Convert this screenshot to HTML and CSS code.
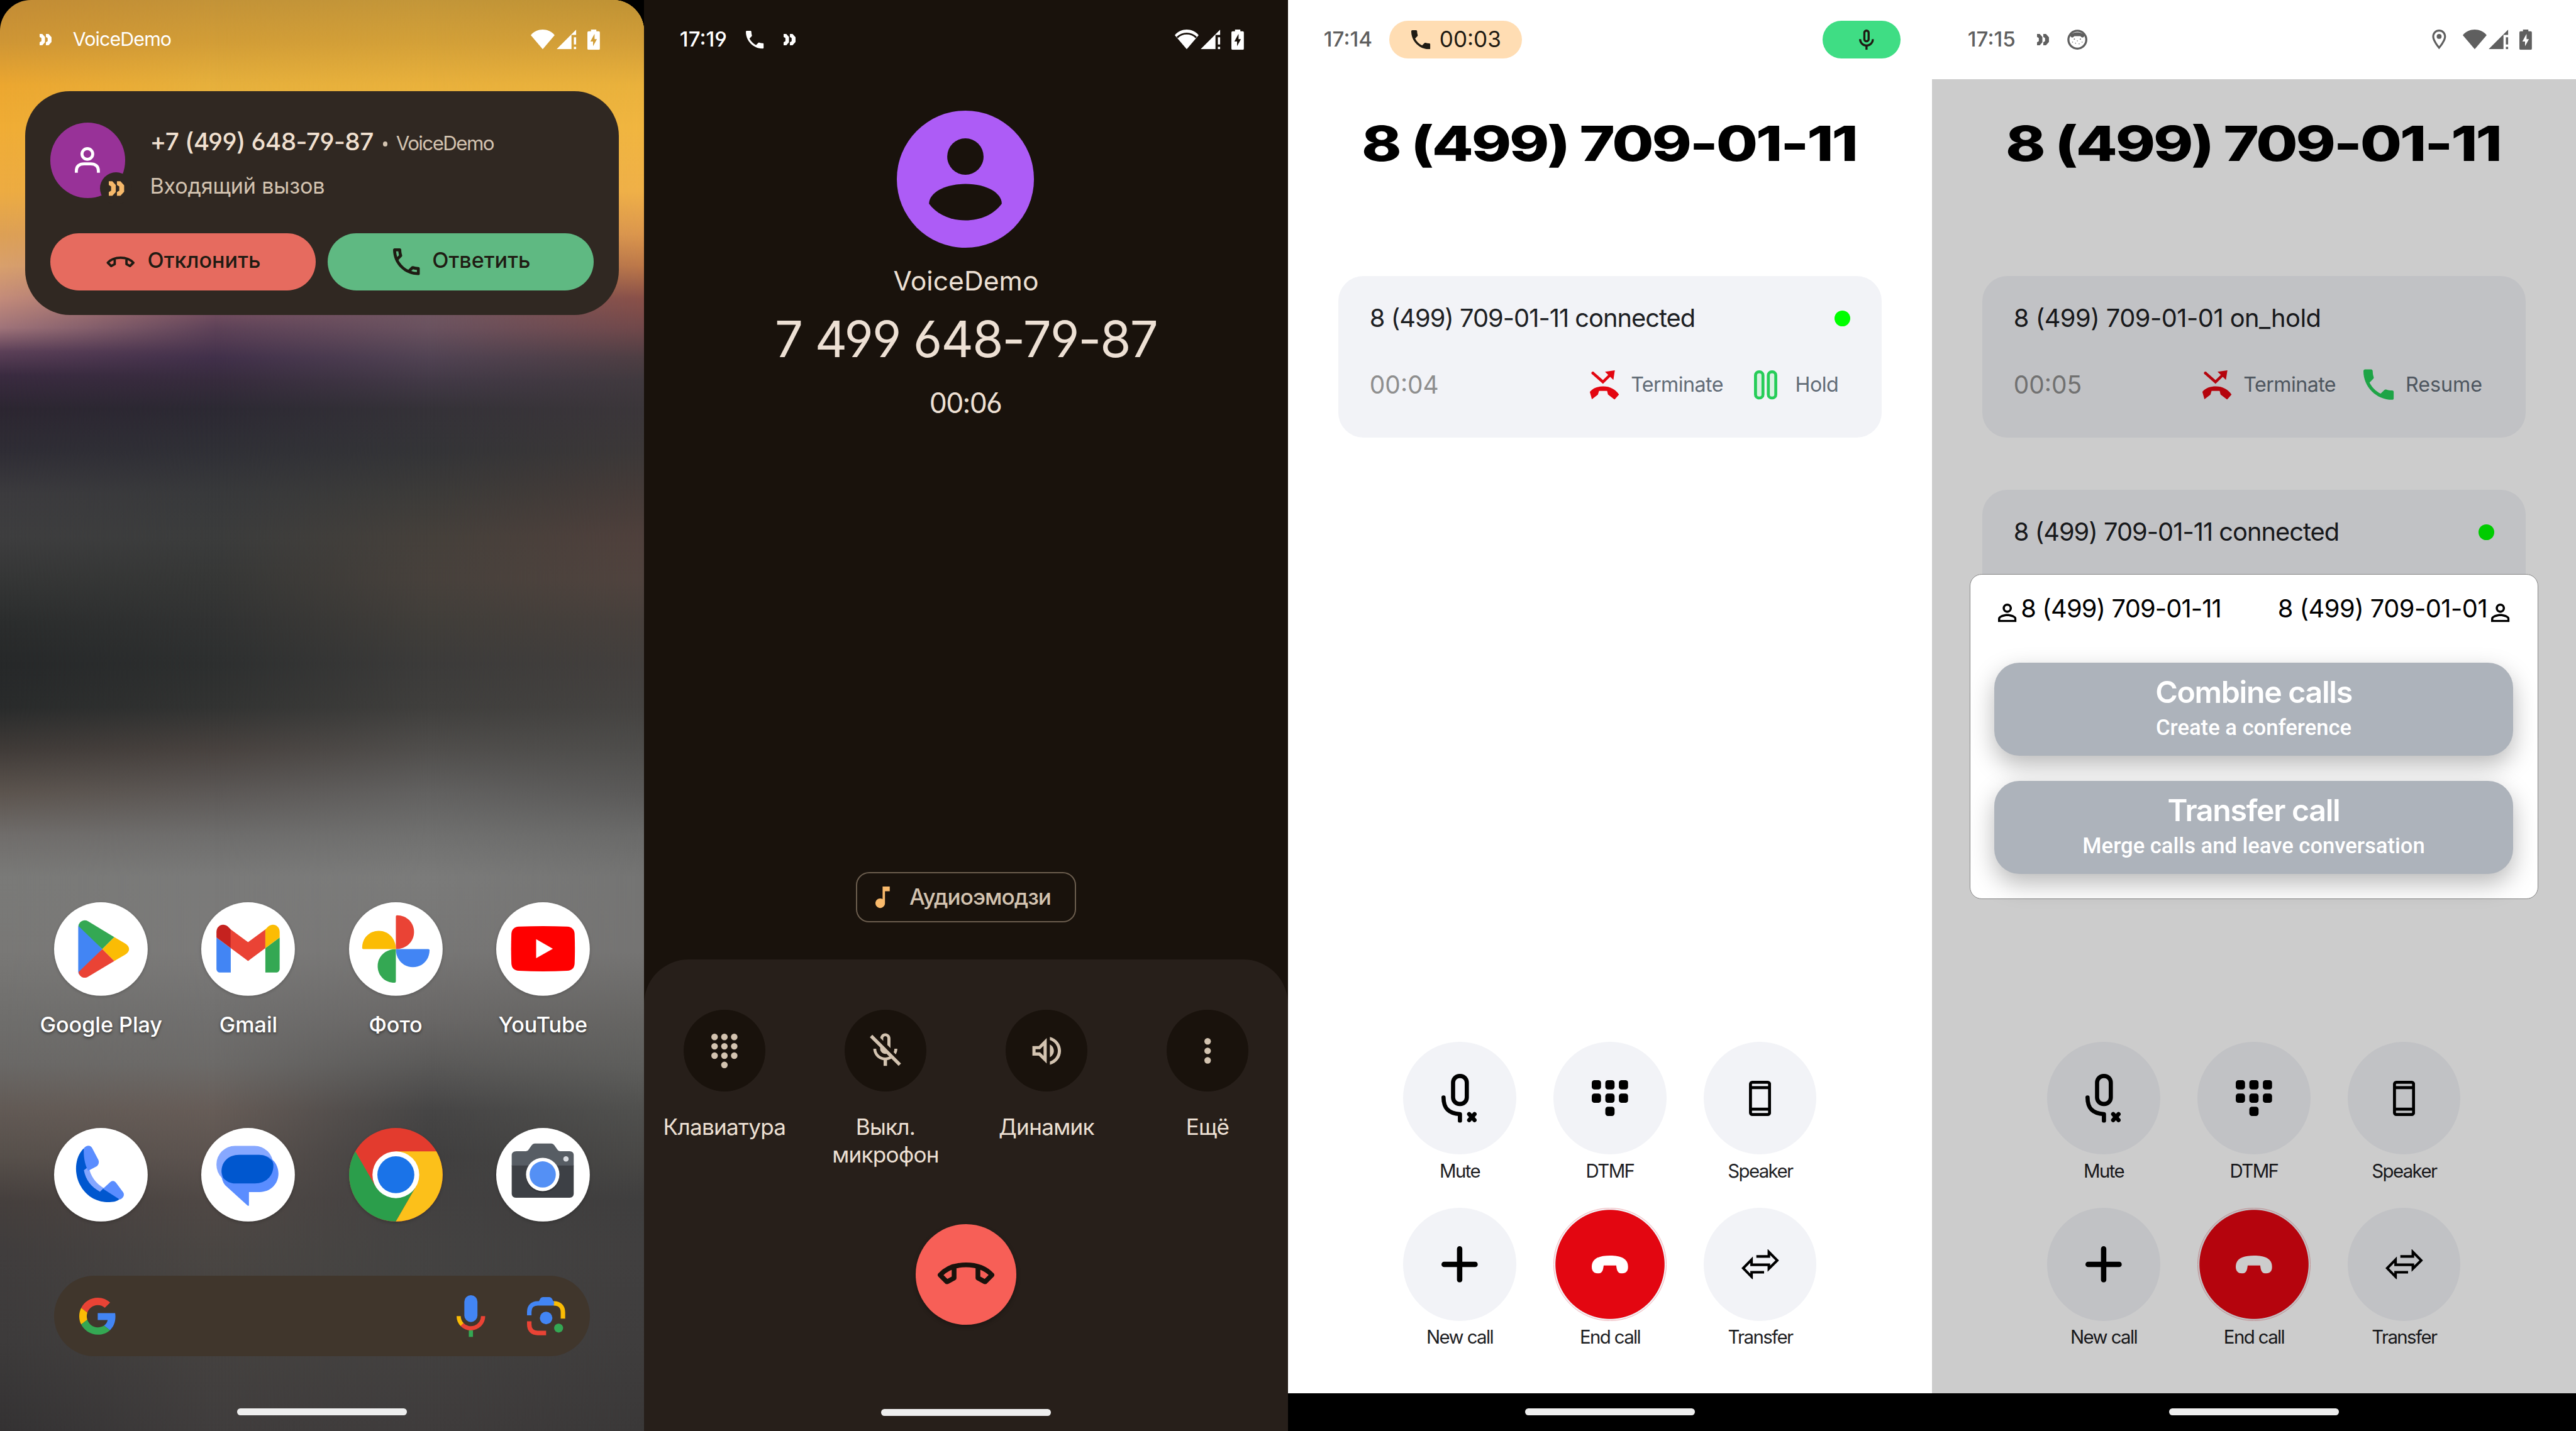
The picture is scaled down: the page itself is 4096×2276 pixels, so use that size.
FILE: index.html
```html
<!DOCTYPE html>
<html lang="ru">
<head>
<meta charset="utf-8">
<title>VoiceDemo</title>
<link rel="stylesheet" href="styles.css">
</head>
<body>
<svg class="sprite" aria-hidden="true">
  <symbol id="brand" viewBox="0 0 20 19"><path d="M0 0h4.500l4.500 5v9l-4.500 5H0v-5l3-1.800V6.800L0 5zM10.500 0h4.500l5 5.500v8L15 19h-4.500v-5l3-1.800V6.800L10.500 5z"/></symbol>
  <symbol id="wifi" viewBox="0 0 40 33"><path d="M20 33L0 9.500C10-3 30-3 40 9.500z"/></symbol>
  <symbol id="wifi-gap" viewBox="0 0 40 33"><path d="M20 33L0 9.500C10-3 30-3 40 9.500z"/><path class="cut" d="M4 13.500C13 4.500 27 4.500 36 13.500" fill="none" stroke-width="3"/></symbol>
  <symbol id="signal" viewBox="0 0 33 33"><path d="M0 33L33 0v9h-8v24zM29 13h4v12h-4zM29 29h4v4h-4z"/></symbol>
  <symbol id="battery" viewBox="0 0 21 34"><path fill-rule="evenodd" d="M6 0h9v3h4a2 2 0 0 1 2 2v27a2 2 0 0 1-2 2H2a2 2 0 0 1-2-2V5a2 2 0 0 1 2-2h4zM12 7L5 20h4.500v8L16 16h-4z"/></symbol>
  <symbol id="call" viewBox="3 3 18 18"><path d="M6.620 10.790c1.440 2.830 3.760 5.140 6.590 6.590l2.200-2.200c.27-.27.67-.36 1.020-.24 1.120.37 2.330.57 3.570.57.55 0 1 .45 1 1V20c0 .55-.45 1-1 1-9.390 0-17-7.610-17-17 0-.55.45-1 1-1h3.500c.55 0 1 .45 1 1 0 1.250.2 2.450.57 3.570.11.35.03.74-.25 1.020l-2.200 2.200z"/></symbol>
  <symbol id="call-outline" viewBox="3 3 18 18"><path d="M6.540 5c.06.89.21 1.760.45 2.590l-1.200 1.200c-.41-1.200-.67-2.470-.76-3.790h1.510m9.860 12.020c.85.24 1.720.39 2.600.45v1.490c-1.320-.09-2.590-.35-3.800-.75l1.200-1.190M7.500 3H4c-.55 0-1 .45-1 1 0 9.390 7.610 17 17 17 .55 0 1-.45 1-1v-3.490c0-.55-.45-1-1-1-1.240 0-2.450-.2-3.570-.57-.1-.04-.21-.05-.31-.05-.26 0-.51.1-.71.29l-2.200 2.200c-2.830-1.450-5.150-3.760-6.590-6.590l2.200-2.200c.28-.28.36-.67.25-1.020C8.700 6.450 8.500 5.250 8.500 4c0-.55-.45-1-1-1z"/></symbol>
  <symbol id="hangup" viewBox="0 0 95 36.500"><path fill="none" stroke="currentColor" stroke-width="8" stroke-linejoin="round" d="M27.500 8v18L15.500 32.500 4 21C15 9 30 4 47.500 4S80 9 91 21L79.500 32.500 67.500 26V8"/></symbol>
  <symbol id="mic" viewBox="5 2 14 19"><path d="M12 14c1.660 0 3-1.340 3-3V5c0-1.660-1.340-3-3-3S9 3.340 9 5v6c0 1.660 1.340 3 3 3zm-1-9c0-.55.45-1 1-1s1 .45 1 1v6c0 .55-.45 1-1 1s-1-.45-1-1V5zm6 6c0 2.760-2.240 5-5 5s-5-2.240-5-5H5c0 3.530 2.610 6.430 6 6.920V21h2v-3.080c3.390-.49 6-3.390 6-6.920h-2z"/></symbol>
  <symbol id="person" viewBox="4 4 16 16"><path d="M12 5.900a2.100 2.100 0 1 1 0 4.200 2.100 2.100 0 0 1 0-4.200m0 9c2.970 0 6.100 1.460 6.100 2.100v1.100H5.900V17c0-.64 3.130-2.100 6.100-2.100M12 4C9.790 4 8 5.790 8 8s1.790 4 4 4 4-1.790 4-4-1.790-4-4-4zm0 9c-2.670 0-8 1.340-8 4v3h16v-3c0-2.660-5.330-4-8-4z"/></symbol>
  <symbol id="terminate" viewBox="0 0 51 49"><path fill="none" stroke="currentColor" stroke-width="4.600" d="M6.500 4l17.500 15.500L38 6"/><circle cx="7" cy="4.500" r="2.300"/><path d="M44 0L27.500 2.300 41.500 16zM2 36C8 29 16 27 24.500 27 36 27 45 32 51 40.500L43.500 49l-11-8.500-1.500-6H17.500l-2 6.500-10 7.500z"/></symbol>
  <symbol id="pause" viewBox="0 0 39 49"><g fill="#daf0e2" stroke="currentColor" stroke-width="5"><rect x="2.500" y="2.500" width="12.500" height="44" rx="6"/><rect x="24" y="2.500" width="12.500" height="44" rx="6"/></g></symbol>
  <symbol id="mute" viewBox="0 0 61 82"><g fill="none" stroke="currentColor" stroke-width="7" stroke-linecap="round" stroke-linejoin="round"><rect x="19.500" y="3.500" width="23" height="47" rx="11"/><path d="M3.500 39.500C3.500 58 12 66.500 31 67.500v11M46.500 67.500l9 10M55.500 67.500l-9 10"/></g></symbol>
  <symbol id="keys" viewBox="0 0 61 60"><rect width="15.500" height="15.500" rx="4.500"/><rect x="22.750" width="15.500" height="15.500" rx="4.500"/><rect x="45.500" width="15.500" height="15.500" rx="4.500"/><rect y="22.500" width="15.500" height="15.500" rx="4.500"/><rect x="22.750" y="22.500" width="15.500" height="15.500" rx="4.500"/><rect x="45.500" y="22.500" width="15.500" height="15.500" rx="4.500"/><rect x="22.750" y="44.500" width="15.500" height="15.500" rx="4.500"/></symbol>
  <symbol id="device" viewBox="0 0 37 59"><g fill="none" stroke="currentColor" stroke-width="5"><rect x="2.500" y="2.500" width="32" height="54" rx="3"/><path d="M3 11.500h31M3 47.500h31"/></g></symbol>
  <symbol id="plus" viewBox="0 0 61 61"><path fill="none" stroke="currentColor" stroke-width="9" stroke-linecap="round" d="M30.500 4.500v52M4.500 30.500h52"/></symbol>
  <symbol id="end" viewBox="0 0 61 30"><path d="M0 19C0 5 12 0 30.500 0S61 5 61 19c0 8-5 11-10.500 11C43 30 42 24 41 16.500H20C19 24 18 30 10.500 30 5 30 0 27 0 19z"/></symbol>
  <symbol id="transfer" viewBox="0 0 63 50"><path fill="none" stroke="currentColor" stroke-width="4.300" d="M25 12h21V4.500L60 18.600 46 32.500V26H17v-8.500L3 31.700 17 46v-7.500h21"/></symbol>
</svg>

<main class="stage">

  <section class="screen home">
    <div class="wall wall-1"></div>
    <div class="wall wall-2"></div>
    <div class="wall wall-3"></div>
    <div class="wall wall-4"></div>
    <div class="home-body">
      <header class="status status-white">
        <svg class="i-brand"><use href="#brand"/></svg>
        <span class="status-app">VoiceDemo</span>
        <span class="status-right">
          <svg class="i-wifi"><use href="#wifi"/></svg>
          <svg class="i-signal"><use href="#signal"/></svg>
          <svg class="i-battery"><use href="#battery"/></svg>
        </span>
      </header>

      <article class="incoming">
        <div class="incoming-head">
          <div class="caller">
            <svg class="caller-person" viewBox="0 0 42 43"><g fill="none" stroke="#fff" stroke-width="5"><circle cx="21" cy="11.500" r="9"/><path d="M2.500 43v-3c0-8 5-12 13-12h11c8 0 13 4 13 12v3"/></g></svg>
            <span class="caller-badge"><svg class="caller-brand"><use href="#brand"/></svg></span>
          </div>
          <div class="incoming-text">
            <div class="incoming-line"><span class="incoming-number">+7 (499) 648-79-87</span><span class="bullet"></span><span class="incoming-app">VoiceDemo</span></div>
            <div class="incoming-sub">Входящий вызов</div>
          </div>
        </div>
        <div class="incoming-actions">
          <button class="pill decline"><svg class="i-hangup-s"><use href="#hangup"/></svg><span>Отклонить</span></button>
          <button class="pill answer"><svg class="i-answer"><use href="#call-outline"/></svg><span>Ответить</span></button>
        </div>
      </article>

      <div class="apps">
        <div class="app">
          <svg class="app-icon" viewBox="0 0 157 157"><circle cx="78.500" cy="78.500" r="78.500" fill="#fff"/><path fill="#4285f4" d="M42 36L81 78.500 42 121q-1.500-2-1.500-5V41q0-3 1.500-5z"/><path fill="#34a853" d="M41 40c1-8 9-12 16-8l44 26.500-20 20z"/><path fill="#ea4335" d="M41 117c1 8 9 12 16 8l44-26.500-20-20z"/><path fill="#fbbc04" d="M101 58.500L119 69c9 5 9 14 0 19l-18 10.500-20-20z"/></svg>
          <span class="app-name">Google Play</span>
        </div>
        <div class="app">
          <svg class="app-icon" viewBox="0 0 157 157"><circle cx="78.500" cy="78.500" r="78.500" fill="#fff"/><path fill="#4285f4" d="M25.500 59l24 18v41H32c-4 0-6.500-2.500-6.500-6.500z"/><path fill="#34a853" d="M131.500 59l-24 18v41H125c4 0 6.500-2.500 6.500-6.500z"/><path fill="#ea4335" d="M49.500 45.500l29 21.500 29-21.500V77l-29 21.500-29-21.500z"/><path fill="#c5221f" d="M25.500 59v-9c0-11 11-16 19-9.500l5 5V77z"/><path fill="#fbbc04" d="M131.500 59v-9c0-11-11-16-19-9.500l-5 5V77z"/></svg>
          <span class="app-name">Gmail</span>
        </div>
        <div class="app">
          <svg class="app-icon" viewBox="0 0 157 157"><circle cx="78.500" cy="78.500" r="78.500" fill="#fff"/><path fill="#ea4335" d="M78.500 24q0-2 2-2c16 0 28.500 12 28.500 28S96 78.500 78.500 78.500z"/><path fill="#4285f4" d="M133 78.500q2 0 2 2c0 16-12 28.500-28 28.500S78.500 96 78.500 78.500z"/><path fill="#34a853" d="M78.500 133q0 2-2 2C60 135 48 123 48 107s13-28.500 30.500-28.500z"/><path fill="#fbbc04" d="M24 78.500q-2 0-2-2C22 60 34 48 50 48s28.500 13 28.500 30.500z"/></svg>
          <span class="app-name">Фото</span>
        </div>
        <div class="app">
          <svg class="app-icon" viewBox="0 0 157 157"><circle cx="78.500" cy="78.500" r="78.500" fill="#fff"/><path fill="red" d="M38 41q40.500-2 81 0c8 .5 12 5 12.500 12q1 25 0 50c-.5 7-4.500 11.500-12.500 12q-40.500 2-81 0c-8-.5-12-5-12.500-12q-1-25 0-50C26 46 30 41.500 38 41z"/><path fill="#fff" d="M67 62l28 16-28 16z"/></svg>
          <span class="app-name">YouTube</span>
        </div>
      </div>

      <div class="apps dock">
        <svg class="app-icon" viewBox="0 0 157 157"><circle cx="78.500" cy="78.500" r="78.500" fill="#fff"/><path fill="#0057cf" d="M50 34c-16 15-17 44-5 64 11 19 30 27 48 26.500 8 0 14-2 18-6L83 101C65 92 56 76 57 60z"/><path fill="#84a6ff" d="M50 71l8-6c3 16 12 28 25 36l-6 6C62 99 53 87 50 71z"/><path fill="#5a8dff" d="M50 34c4-5 11-6 14 0l10 19c2 4 1 8-2 11l-15 8C51 60 49 46 50 34zM82 102l12-11c3-3 7-3 10 1l12 16c3 5-1 11-6 12z"/></svg>
        <svg class="app-icon" viewBox="0 0 157 157"><circle cx="78.500" cy="78.500" r="78.500" fill="#fff"/><rect x="25.500" y="30" width="95" height="63" rx="31" fill="#87a8ff"/><path fill="#5a8dff" d="M66 45h32c18 0 31.500 14 31.500 31.500S116 107.500 98 107.500H80V129q0 3-2.500 1L40 96c-4-5-6-11-6-19 0-18 14-32 32-32z"/><path fill="#0057cf" d="M63 45h34c8 0 15 3 22 10 2 4 2 6 2 8 0 18-13 30-31 30H57c-8 0-14-3-20-9-2-5-3-8-3-12 0-15 12-27 29-27z"/></svg>
        <svg class="app-icon" viewBox="0 0 157 157"><circle cx="78.500" cy="78.500" r="78.500" fill="#e33b2e"/><path fill="#2b9e4b" d="M10.500 39.250l34 58.850h68L78.500 157A78.500 78.500 0 0 1 10.500 39.250z"/><path fill="#fcc01a" d="M78.500 157l34-58.900-34-58.850h68A78.500 78.500 0 0 1 78.500 157z"/><circle cx="78.500" cy="78.500" r="39.250" fill="#fff"/><circle cx="78.500" cy="78.500" r="31" fill="#1a73e8"/></svg>
        <svg class="app-icon" viewBox="0 0 157 157"><circle cx="78.500" cy="78.500" r="78.500" fill="#fff"/><path fill="#575d64" d="M34 39h16q3 0 4.500-3l5-7q2-3 5-3h28q3 0 5 3l5 7q1.500 3 4.500 3h16q7 0 7 7v18H26V46q0-7 8-7z"/><path fill="#3d4045" d="M26 63h104v47q0 7-7 7H33q-7 0-7-7z"/><circle cx="78" cy="81" r="28" fill="#33353a"/><circle cx="78" cy="78" r="28" fill="#fff"/><circle cx="78" cy="78" r="22" fill="#5490f5"/><circle cx="117" cy="52" r="4.500" fill="#dadce0"/></svg>
      </div>

      <div class="search">
        <svg class="i-google" viewBox="0 0 48 48"><path fill="#ea4335" d="M24 9.500c3.540 0 6.710 1.220 9.210 3.600l6.850-6.850C35.900 2.380 30.470 0 24 0 14.620 0 6.510 5.380 2.560 13.220l7.980 6.190C12.430 13.720 17.740 9.500 24 9.500z"/><path fill="#4285f4" d="M46.980 24.550c0-1.570-.15-3.090-.38-4.550H24v9.020h12.940c-.58 2.960-2.260 5.480-4.780 7.180l7.730 6c4.510-4.180 7.090-10.360 7.090-17.650z"/><path fill="#fbbc05" d="M10.530 28.590c-.48-1.450-.76-2.990-.76-4.590s.27-3.140.76-4.590l-7.980-6.190C.92 16.460 0 20.120 0 24c0 3.880.92 7.540 2.560 10.780l7.970-6.190z"/><path fill="#34a853" d="M24 48c6.480 0 11.930-2.130 15.890-5.810l-7.730-6c-2.150 1.450-4.920 2.300-8.160 2.300-6.260 0-11.570-4.220-13.470-9.910l-7.980 6.190C6.510 42.620 14.620 48 24 48z"/></svg>
        <svg class="i-gmic" viewBox="0 0 48 70"><rect x="13" width="22" height="45" rx="11" fill="#4285f4"/><g fill="none" stroke-width="7"><path stroke="#ea4335" d="M44.500 35A20.500 20.500 0 0 1 9 49"/><path stroke="#fbbc04" d="M3.500 35a20.500 20.500 0 0 0 5.700 14.200"/><path stroke="#34a853" d="M24 59v11"/></g></svg>
        <svg class="i-lens" viewBox="0 0 64 64"><g fill="none" stroke-width="7.500"><path stroke="#4285f4" d="M3.750 30.500V25c0-9 5-14.500 14-14.500h28"/><path stroke="#fbbc04" d="M45 10.500c10 0 15.250 6 15.250 15V36"/><path stroke="#ea4335" d="M3.750 40.500V46c0 9 5 14.250 14 14.250H32"/></g><path fill="#4285f4" d="M18 11l4-8q1.500-3 4.500-3h11q3 0 4.500 3l4 8z"/><circle cx="32" cy="35" r="10.500" fill="#4285f4"/><circle cx="53" cy="52" r="7.500" fill="#34a853"/></svg>
      </div>
      <div class="gesture"></div>
    </div>
  </section>

  <section class="screen dialer">
    <header class="status status-white">
      <span class="clock">17:19</span>
      <svg class="i-call"><use href="#call"/></svg>
      <svg class="i-brand"><use href="#brand"/></svg>
      <span class="status-right">
        <svg class="i-wifi"><use href="#wifi-gap"/></svg>
        <svg class="i-signal"><use href="#signal"/></svg>
        <svg class="i-battery"><use href="#battery"/></svg>
      </span>
    </header>
    <svg class="dialer-avatar" viewBox="0 0 230 230"><circle cx="115" cy="115" r="115" fill="#ad5cf6"/><circle cx="115" cy="77" r="30.500" fill="#19120c"/><path fill="#19120c" d="M54 156c0-17 24-33 61-33s61 16 61 33c-13 18-36 28-61 28s-48-10-61-28z"/></svg>
    <div class="dialer-name">VoiceDemo</div>
    <div class="dialer-number">7 499 648-79-87</div>
    <div class="dialer-timer">00:06</div>
    <div class="chip"><svg class="i-note" viewBox="6 3 12 18"><path fill="#f9ba6c" d="M12 3v10.550c-.59-.34-1.270-.55-2-.55-2.210 0-4 1.790-4 4s1.790 4 4 4 4-1.790 4-4V7h4V3h-6z"/></svg><span>Аудиоэмодзи</span></div>
    <div class="sheet">
      <div class="sheet-row">
        <div class="tool"><div class="tool-disc"><svg class="i-dialpad" viewBox="0 0 44 58"><circle cx="5.500" cy="5.500" r="5.500"/><circle cx="22" cy="5.500" r="5.500"/><circle cx="38.500" cy="5.500" r="5.500"/><circle cx="5.500" cy="21.200" r="5.500"/><circle cx="22" cy="21.200" r="5.500"/><circle cx="38.500" cy="21.200" r="5.500"/><circle cx="5.500" cy="36.900" r="5.500"/><circle cx="22" cy="36.900" r="5.500"/><circle cx="38.500" cy="36.900" r="5.500"/><circle cx="22" cy="52.500" r="5.500"/></svg></div><span>Клавиатура</span></div>
        <div class="tool"><div class="tool-disc"><svg class="i-micoff" viewBox="0 0 24 24"><path d="M19 11h-1.700c0 .74-.16 1.430-.43 2.050l1.230 1.230c.56-.98.9-2.090.9-3.280zM10.800 4.900c0-.66.54-1.200 1.200-1.200s1.200.54 1.200 1.200l-.01 3.910L15 10.600V5c0-1.660-1.340-3-3-3-1.540 0-2.790 1.160-2.960 2.650l1.760 1.760V4.900zM4.410 2.860L3 4.270l6 6V11c0 1.660 1.340 3 3 3 .23 0 .44-.03.65-.08l1.660 1.660c-.71.33-1.500.52-2.310.52-2.760 0-5.300-2.100-5.300-5.100H5c0 3.410 2.720 6.230 6 6.720V21h2v-3.280c.91-.13 1.770-.45 2.550-.9l4.200 4.200 1.410-1.410L4.410 2.860z"/></svg></div><span>Выкл.</span><span>микрофон</span></div>
        <div class="tool"><div class="tool-disc"><svg class="i-volume" viewBox="0 0 24 24"><path fill-rule="evenodd" d="M3 9v6h4l5 5V4L7 9H3zm7-.17v6.340L7.830 13H5v-2h2.830L10 8.830zM16.500 12c0-1.770-1.020-3.290-2.500-4.030v8.050c1.480-.73 2.500-2.250 2.500-4.020zM14 3.230v2.060c2.890.86 5 3.540 5 6.710s-2.110 5.850-5 6.710v2.060c4.010-.91 7-4.490 7-8.770s-2.990-7.860-7-8.770z"/></svg></div><span>Динамик</span></div>
        <div class="tool"><div class="tool-disc"><svg class="i-more" viewBox="0 0 11 43"><circle cx="5.500" cy="5.500" r="5.500"/><circle cx="5.500" cy="21.500" r="5.500"/><circle cx="5.500" cy="37.500" r="5.500"/></svg></div><span>Ещё</span></div>
      </div>
      <div class="dialer-end"><svg class="i-hangup"><use href="#hangup"/></svg></div>
      <div class="gesture"></div>
    </div>
  </section>

  <section class="screen phone">
    <header class="status status-grey">
      <span class="clock">17:14</span>
      <span class="live"><svg class="i-live"><use href="#call"/></svg><span>00:03</span></span>
      <span class="mic-pill"><svg class="i-mic"><use href="#mic"/></svg></span>
    </header>
    <div class="phone-body">
      <h1 class="title"><span>8 (499) 709-01-11</span></h1>
      <div class="cards">
        <article class="card">
          <div class="card-top"><span class="card-title">8 (499) 709-01-11 connected</span><i class="dot"></i></div>
          <div class="card-bottom">
            <span class="card-time">00:04</span>
            <svg class="i-term"><use href="#terminate"/></svg><span class="card-act">Terminate</span>
            <svg class="i-pause"><use href="#pause"/></svg><span class="card-act act-hold">Hold</span>
          </div>
        </article>
      </div>
      <div class="controls">
        <div class="control"><div class="disc"><svg class="i-mute"><use href="#mute"/></svg></div><span>Mute</span></div>
        <div class="control"><div class="disc"><svg class="i-keys"><use href="#keys"/></svg></div><span>DTMF</span></div>
        <div class="control"><div class="disc"><svg class="i-device"><use href="#device"/></svg></div><span>Speaker</span></div>
        <div class="control"><div class="disc"><svg class="i-plus"><use href="#plus"/></svg></div><span>New call</span></div>
        <div class="control"><div class="disc disc-end"><svg class="i-end"><use href="#end"/></svg></div><span>End call</span></div>
        <div class="control"><div class="disc"><svg class="i-transfer"><use href="#transfer"/></svg></div><span>Transfer</span></div>
      </div>
    </div>
    <footer class="nav"><div class="gesture"></div></footer>
  </section>

  <section class="screen phone">
    <header class="status status-grey">
      <span class="clock">17:15</span>
      <svg class="i-brand i-brand-2"><use href="#brand"/></svg>
      <svg class="i-cat" viewBox="0 0 34 34"><circle cx="17" cy="17" r="15" fill="#fff" stroke="currentColor" stroke-width="3.500"/><path d="M5 10C9 3 25 3 29 10c-1 3-3 4-5 3l-2-2H12l-2 2c-2 1-4 0-5-3z"/><g fill="currentColor"><circle cx="12" cy="16" r="1"/><circle cx="22" cy="16" r="1"/><circle cx="9" cy="21" r=".8"/><circle cx="25" cy="21" r=".8"/><circle cx="14" cy="23" r=".8"/><circle cx="20" cy="24" r=".8"/><circle cx="17" cy="19" r=".8"/></g></svg>
      <span class="status-right">
        <svg class="i-pin" viewBox="5 2 14 20"><path fill-rule="evenodd" d="M12 2C8.130 2 5 5.130 5 9c0 5.250 7 13 7 13s7-7.750 7-13c0-3.870-3.130-7-7-7zM7 9c0-2.760 2.240-5 5-5s5 2.240 5 5c0 2.880-2.880 7.190-5 9.880C9.920 16.210 7 11.850 7 9z"/><circle cx="12" cy="9" r="2.500"/></svg>
        <svg class="i-wifi"><use href="#wifi"/></svg>
        <svg class="i-signal"><use href="#signal"/></svg>
        <svg class="i-battery"><use href="#battery"/></svg>
      </span>
    </header>
    <div class="phone-body">
      <h1 class="title"><span>8 (499) 709-01-11</span></h1>
      <div class="cards">
        <article class="card">
          <div class="card-top"><span class="card-title card-title-held">8 (499) 709-01-01 on_hold</span></div>
          <div class="card-bottom">
            <span class="card-time">00:05</span>
            <svg class="i-term"><use href="#terminate"/></svg><span class="card-act">Terminate</span>
            <svg class="i-resume"><use href="#call"/></svg><span class="card-act act-resume">Resume</span>
          </div>
        </article>
        <article class="card">
          <div class="card-top"><span class="card-title">8 (499) 709-01-11 connected</span><i class="dot"></i></div>
        </article>
      </div>
      <div class="controls">
        <div class="control"><div class="disc"><svg class="i-mute"><use href="#mute"/></svg></div><span>Mute</span></div>
        <div class="control"><div class="disc"><svg class="i-keys"><use href="#keys"/></svg></div><span>DTMF</span></div>
        <div class="control"><div class="disc"><svg class="i-device"><use href="#device"/></svg></div><span>Speaker</span></div>
        <div class="control"><div class="disc"><svg class="i-plus"><use href="#plus"/></svg></div><span>New call</span></div>
        <div class="control"><div class="disc disc-end"><svg class="i-end"><use href="#end"/></svg></div><span>End call</span></div>
        <div class="control"><div class="disc"><svg class="i-transfer"><use href="#transfer"/></svg></div><span>Transfer</span></div>
      </div>
      <div class="scrim"></div>
      <div class="modal">
        <div class="modal-head">
          <svg class="i-person"><use href="#person"/></svg><span class="peer">8 (499) 709-01-11</span>
          <span class="peer peer-2">8 (499) 709-01-01</span><svg class="i-person"><use href="#person"/></svg>
        </div>
        <button class="choice"><span class="choice-title">Combine calls</span><span class="choice-sub">Create a conference</span></button>
        <button class="choice"><span class="choice-title">Transfer call</span><span class="choice-sub">Merge calls and leave conversation</span></button>
      </div>
    </div>
    <footer class="nav"><div class="gesture"></div></footer>
  </section>

</main>
</body>
</html>
```
FILE: styles.css
```css
* { box-sizing: border-box; }

/* 1rem is 100 design pixels of a 1080x2400 screen */
html { font-size: 94.8148px; }

body {
  margin: 0;
  background: #000;
  font-family: Inter, "Noto Sans", sans-serif;
  font-size: .36rem;
  white-space: nowrap;
}

svg { display: block; flex: none; fill: currentColor; overflow: visible; }
button { border: 0; margin: 0; padding: 0; font: inherit; }
.sprite { position: absolute; width: 0; height: 0; }

.stage { display: grid; grid-template-columns: repeat(4, 10.8rem); height: 24.005rem; width: 43.2rem; overflow: hidden; }
.screen { position: relative; height: 24.005rem; overflow: hidden; display: flex; flex-direction: column; }

/* straight-legged six and nine */
.home, .dialer { font-feature-settings: "cv03", "cv04"; }

/* status bar */
.status { height: 1.325rem; flex: none; display: flex; align-items: center; padding: 0 .74rem 0 .6rem; line-height: .6rem; }
.status-white { color: #fff; }
.status-grey { color: #5f5f5f; background: #fff; }
.status-right { margin-left: auto; display: flex; align-items: center; }
.clock { font-weight: 500; font-size: .35rem; width: .79rem; }
.i-brand { width: .2rem; height: .19rem; }
.i-wifi { width: .4rem; height: .33rem; }
.i-signal { width: .33rem; height: .33rem; margin-left: .03rem; }
.i-battery { width: .21rem; height: .34rem; margin-left: .19rem; }
.i-call { width: .3rem; height: .3rem; margin-left: .32rem; }
.i-call + .i-brand { margin-left: .33rem; }
.i-brand-2 { margin-left: .37rem; }
.i-cat { width: .34rem; height: .34rem; margin-left: .31rem; }
.i-pin { width: .24rem; height: .33rem; margin-right: .27rem; }
.cut { stroke: #19120c; }

.gesture { width: 2.84rem; height: .11rem; border-radius: .055rem; background: #eee; margin: 0 auto; flex: none; }

/* home screen */
.home { border-radius: .52rem .52rem 0 0; }
.wall { position: absolute; inset: 0; }
.wall-1 { background: linear-gradient(#c38c35 0, #cf9635 .71rem, #eca730 1.43rem, #f0ad35 2.14rem, #edac42 3.21rem, #dda055 3.93rem, #d9a06c 4.46rem, #c48c7a 5rem, #a0747a 5.5rem, #5c4058 5.9rem, #3a2b40 6.3rem, #2c2631 6.86rem, #2f2d35 7.57rem, #3c3b3e 8.28rem, #3e3e3f 9rem, #353636 9.71rem, #2b2d2d 10.43rem, #262829 11.14rem, #292b2b 11.86rem, #403b38 12.57rem, #5c544e 13.29rem, #706d6b 14rem, #7a7a78 14.71rem, #797876 15.95rem, #6f6e6c 17.1rem, #6a6866 17.86rem, #625a55 18.63rem, #57504b 19.39rem, #453f3d 20.16rem, #403d3d 21rem, #3d3b3b 22.5rem, #343233 24rem); }
.wall-2 { background: linear-gradient(#c39338 0, #d29d37 .71rem, #e6b03c 1.43rem, #eab33e 2.14rem, #e9ae46 3.21rem, #d8a060 3.93rem, #b88870 4.46rem, #855866 5rem, #5e4258 5.5rem, #41304a 6rem, #362b3c 6.4rem, #2c2933 6.86rem, #303036 7.57rem, #38393b 8.28rem, #3b3c3c 9rem, #363736 9.71rem, #313232 10.43rem, #2d2f2f 11.14rem, #323332 11.86rem, #48423f 12.57rem, #5c5856 13.29rem, #6e6d6c 14rem, #7a7a79 14.71rem, #7b7a79 15.95rem, #706f6e 17.1rem, #6c6a68 17.86rem, #665c57 18.63rem, #5c534f 19.39rem, #4f4845 20.16rem, #4a4643 21rem, #454240 22.5rem, #403d3d 24rem); mask-image: linear-gradient(90deg, transparent 0, #000 33.3%); }
.wall-3 { background: linear-gradient(#c39639 0, #d3a038 .71rem, #e9b13c 1.43rem, #edb53f 2.14rem, #e8ab48 3.21rem, #c89060 3.93rem, #9a7068 4.46rem, #755a64 5rem, #6a525f 5.5rem, #514353 6rem, #423946 6.4rem, #353238 6.86rem, #343437 7.57rem, #3c3b39 8.28rem, #45403b 9rem, #47413c 9.71rem, #413e3a 10.43rem, #3c3b3a 11.14rem, #403f3d 11.86rem, #504e4c 12.57rem, #626160 13.29rem, #70706f 14rem, #7b7b7a 14.71rem, #777675 15.95rem, #696766 17.1rem, #5a5958 17.86rem, #464545 18.63rem, #403f3f 19.39rem, #434141 20.16rem, #444342 21rem, #434140 22.5rem, #3f3c3c 24rem); mask-image: linear-gradient(90deg, transparent 33.3%, #000 66.6%); }
.wall-4 { background: linear-gradient(#bf9234 0, #d29e38 .71rem, #e9b13c 1.43rem, #f0b540 2.14rem, #efb048 3.21rem, #db964c 3.93rem, #bd7848 4.46rem, #8a5048 5rem, #71484a 5.5rem, #4e3e43 6rem, #40393e 6.4rem, #3b363a 6.86rem, #3c3838 7.57rem, #453b38 8.28rem, #4f403c 9rem, #50433e 9.71rem, #47403c 10.43rem, #433f3d 11.14rem, #454341 11.86rem, #4e4d4b 12.57rem, #5a5958 13.29rem, #6a6a69 14rem, #747473 14.71rem, #757473 15.95rem, #666563 17.1rem, #5e5e5c 17.86rem, #50504e 18.63rem, #494846 19.39rem, #3f3e3e 20.16rem, #413f3f 21rem, #3f3d3d 22.5rem, #3a3838 24rem); mask-image: linear-gradient(90deg, transparent 66.6%, #000 100%); }
.home-body { position: relative; display: flex; flex-direction: column; }
.home .status { padding-left: .66rem; }
.status-app { margin-left: .36rem; font-size: .32rem; letter-spacing: -.009rem; }

.incoming { width: 9.96rem; height: 3.75rem; margin: .205rem auto 0; padding: .47rem .42rem 0; border-radius: .75rem; background: #302822; }
.incoming-head { display: flex; height: 1.48rem; }
.caller { position: relative; width: 1.26rem; height: 1.26rem; margin-top: .06rem; border-radius: 50%; background: #983298; padding: .41rem 0 0 .42rem; }
.caller-person { width: .42rem; height: .43rem; }
.caller-badge { position: absolute; left: .84rem; top: .83rem; width: .54rem; height: .54rem; border-radius: 50%; background: #302822; color: #f6b96b; display: grid; place-items: center; }
.caller-brand { width: .26rem; height: .25rem; }
.incoming-text { margin-left: .415rem; line-height: .74rem; color: #d3c3b0; }
.incoming-line { display: flex; align-items: baseline; }
.incoming-number { color: #f0e0d0; font-weight: 500; font-size: .41rem; letter-spacing: -.0065rem; }
.bullet { width: .08rem; height: .08rem; border-radius: 50%; background: #d3c3b0; margin: 0 .14rem 0 .16rem; align-self: center; position: relative; top: .03rem; }
.incoming-app { font-size: .33rem; letter-spacing: -.0165rem; }
.incoming-sub { font-size: .36rem; line-height: .69rem; letter-spacing: -.002rem; }
.incoming-actions { display: flex; gap: .2rem; margin-top: .43rem; }
.pill { flex: 1; height: .96rem; border-radius: .48rem; display: flex; align-items: center; justify-content: center; gap: .21rem; color: #1f1b13; font-weight: 500; font-size: .36rem; line-height: .6rem; }
.pill span { margin-top: -.04rem; }
.decline { background: #e66b5f; padding-left: .02rem; }
.answer { background: #5fb982; padding-left: .03rem; }
.i-hangup-s { width: .48rem; height: .18rem; }
.i-answer { width: .45rem; height: .45rem; }

.apps { display: grid; grid-template-columns: repeat(4, 2.47rem); justify-content: center; justify-items: center; margin-top: 9.85rem; }
.app { display: flex; flex-direction: column; align-items: center; }
.app-icon { width: 1.57rem; height: 1.57rem; border-radius: 50%; box-shadow: 0 .02rem .06rem rgba(0,0,0,.2); }
.app-name { margin-top: .25rem; line-height: .49rem; color: #fff; font-size: .36rem; font-weight: 500; text-shadow: 0 .02rem .05rem rgba(0,0,0,.5); }
.dock { margin-top: 1.48rem; }

.search { display: flex; align-items: center; width: 8.99rem; height: 1.35rem; margin: .91rem auto 0; padding: 0 .42rem; border-radius: .675rem; background: #40362c; }
.i-google { width: .62rem; height: .62rem; }
.i-gmic { width: .48rem; height: .7rem; margin-left: auto; }
.i-lens { width: .64rem; height: .64rem; margin-left: .7rem; }
.home .gesture { margin-top: .88rem; }

/* call screen */
.dialer { background: #19120c; color: #ede0d4; align-items: center; }
.dialer .status { align-self: stretch; }
.dialer-avatar { width: 2.3rem; height: 2.3rem; margin: .53rem .02rem 0 0; }
.dialer-name { margin-top: .21rem; line-height: .7rem; font-size: .45rem; }
.dialer-number { margin-top: .07rem; line-height: 1.1rem; font-size: .84rem; letter-spacing: -.019rem; }
.dialer-timer { margin-top: .23rem; line-height: .6rem; font-size: .47rem; letter-spacing: -.018rem; padding-right: .02rem; }
.chip { display: flex; align-items: center; width: 3.69rem; height: .84rem; margin-top: 7.565rem; border: .025rem solid #6b5d4e; border-radius: .22rem; padding-left: .31rem; color: #d3c3b0; font-size: .37rem; line-height: .6rem; font-weight: 500; letter-spacing: -.0105rem; }
.chip span { margin: -.02rem 0 0 .325rem; }
.i-note { width: .24rem; height: .36rem; }
.sheet { align-self: stretch; flex: 1; margin-top: .63rem; padding-top: .84rem; border-radius: .75rem .75rem 0 0; background: #271f1a; }
.sheet-row { display: grid; grid-template-columns: repeat(4, 2.7rem); height: 3.6rem; }
.tool { display: flex; flex-direction: column; align-items: center; font-size: .37rem; line-height: .465rem; letter-spacing: -.0075rem; }
.tool-disc { width: 1.37rem; height: 1.37rem; margin-bottom: .36rem; border-radius: 50%; background: #19120c; color: #d3c3b0; display: grid; place-items: center; }
.i-dialpad { width: .44rem; height: .58rem; }
.i-micoff { width: .69rem; height: .69rem; }
.i-volume { width: .64rem; height: .64rem; }
.i-more { width: .11rem; height: .43rem; }
.dialer-end { width: 1.68rem; height: 1.68rem; margin: 0 auto; border-radius: 50%; background: #f75f57; color: #19120c; display: grid; place-items: center; box-shadow: 0 .03rem .08rem rgba(0,0,0,.3); }
.i-hangup { width: .95rem; height: .365rem; margin-top: -.04rem; }
.dialer .gesture { margin-top: 1.42rem; }

/* softphone */
.phone { background: #fff; }
.live { display: flex; align-items: center; width: 2.22rem; height: .63rem; margin-left: .31rem; padding-left: .37rem; border-radius: .315rem; background: #ffddb3; color: #1f1b13; font-size: .37rem; }
.i-live { width: .32rem; height: .32rem; margin-right: .15rem; }
.mic-pill { display: flex; align-items: center; width: 1.3rem; height: .63rem; margin: 0 -.21rem 0 auto; padding-left: .61rem; border-radius: .315rem; background: #3fdd84; color: #1f1b13; }
.i-mic { width: .25rem; height: .34rem; }
.phone-body { position: relative; flex: 1; display: flex; flex-direction: column; }
.title { margin: .59rem 0 0; line-height: 1rem; font-size: .81rem; font-weight: 800; text-align: center; color: #000; }
.title span { display: inline-block; letter-spacing: -.027rem; transform: scaleX(1.25); padding-right: .03rem; }
.cards { margin-top: 1.71rem; display: grid; gap: .87rem; justify-content: center; }
.card { width: 9.12rem; height: 2.72rem; padding: .415rem .53rem 0; border-radius: .42rem; background: #f2f3f7; color: #1d2023; }
.card-top { display: flex; align-items: center; justify-content: space-between; line-height: .6rem; font-size: .42rem; letter-spacing: -.0105rem; }
.card-title-held { letter-spacing: -.0055rem; }
.dot { width: .26rem; height: .26rem; border-radius: 50%; background: #0f0; }
.card-bottom { display: flex; align-items: center; margin-top: .515rem; height: .6rem; line-height: .57rem; }
.card-time { margin-right: auto; font-size: .41rem; color: #8e8e8e; }
.card-act { color: #626c77; font-size: .34rem; margin-left: .2rem; letter-spacing: -.006rem; }
.act-hold { margin-left: .3rem; margin-right: .2rem; }
.act-resume { margin-left: .2rem; margin-right: .2rem; letter-spacing: 0; }
.i-term { width: .51rem; height: .49rem; color: #e30611; }
.i-pause { width: .39rem; height: .49rem; margin-left: .52rem; color: #26cd58; }
.i-resume { width: .51rem; height: .52rem; margin-left: .46rem; color: #26cd58; }

.controls { margin-top: auto; padding-bottom: .735rem; display: grid; grid-template-columns: repeat(3, 2.52rem); justify-content: center; row-gap: .42rem; color: #1d2023; }
.control { display: flex; flex-direction: column; align-items: center; font-size: .31rem; line-height: .4rem; letter-spacing: -.017rem; }
.disc { width: 1.89rem; height: 1.89rem; margin-bottom: .08rem; border-radius: 50%; background: #f2f3f7; color: #000; display: grid; place-items: center; }
.disc-end { border: .005rem solid #f3b4b8; background: radial-gradient(circle, #e30611 .91rem, #f2f3f7 .92rem); color: #fff; }
.i-mute { width: .61rem; height: .82rem; }
.i-keys { width: .61rem; height: .6rem; }
.i-device { width: .37rem; height: .59rem; }
.i-plus { width: .61rem; height: .61rem; }
.i-end { width: .61rem; height: .3rem; }
.i-transfer { width: .63rem; height: .5rem; }
.nav { height: .635rem; padding-top: .26rem; background: #000; }

.scrim { position: absolute; inset: 0; background: rgba(0,0,0,.2); }
.modal { position: absolute; left: .63rem; top: 8.3rem; width: 9.54rem; height: 5.46rem; border: .02rem solid #888; border-radius: .2rem; background: #fff; }
.modal-head { display: flex; align-items: center; margin: .275rem .47rem 0; height: .6rem; font-size: .42rem; line-height: .6rem; letter-spacing: -.009rem; color: #000; }
.i-person { width: .31rem; height: .31rem; margin-top: .13rem; }
.peer { margin-left: .07rem; }
.peer-2 { margin: 0 .065rem 0 auto; letter-spacing: -.0055rem; }
.choice { display: flex; flex-direction: column; align-items: center; width: 8.71rem; height: 1.56rem; margin: .61rem 0 0 .4rem; padding-top: .195rem; border-radius: .42rem; background: #adb3bb; color: #fff; box-shadow: 0 .16rem .4rem rgba(0,0,0,.28); }
.choice + .choice { margin-top: .42rem; }
.choice-title { font-size: .51rem; font-weight: 600; line-height: .6rem; letter-spacing: -.014rem; }
.choice-sub { margin-top: .07rem; font-size: .365rem; font-weight: 500; line-height: .46rem; font-family: Roboto, sans-serif; }
```
